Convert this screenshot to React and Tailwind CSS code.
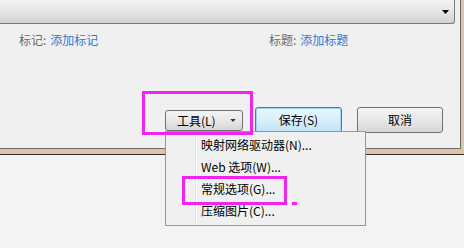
import React from "react";

const menuItems = [
  "映射网络驱动器(N)...",
  "Web 选项(W)...",
  "常规选项(G)...",
  "压缩图片(C)...",
];

const Caret = ({ className }) => (
  <svg width="7" height="4" viewBox="0 0 7 4" className={className}>
    <path d="M0 0H7L3.5 4Z" fill="currentColor" />
  </svg>
);

export default function App() {
  return (
    <div
      className="relative w-[464px] h-[248px] overflow-hidden bg-[#f3f3f3] text-[12px] leading-[16px]"
      style={{ fontFamily: '"Noto Sans CJK SC", "Noto Sans", sans-serif' }}
    >
      {/* window with frame */}
      <div className="bg-[#dfc4a8] pr-[3px] pb-[5px] border-b border-[#2e2e2e]">
        <div className="h-[149px] bg-[#f0f0f0] border-r border-b border-[#6b6b6b]">
          {/* combobox, cut off at top */}
          <div className="w-[455px] h-[24px] flex items-center justify-end pr-[5px] border-r border-b border-[#7a7a7a] rounded-br-[3px] bg-gradient-to-b from-[#f3f3f3] via-[#e6e6e6] to-[#d2d2d2]">
            <Caret className="text-black" />
          </div>

          {/* labels */}
          <div className="flex mt-[8px] pl-[19px]">
            <div className="w-[250px] flex">
              <span className="text-[#6a6a6a]">标记:</span>
              <span className="ml-[4px] text-[#2b7bd4]">添加标记</span>
            </div>
            <div className="flex">
              <span className="text-[#6a6a6a]">标题:</span>
              <span className="ml-[4px] text-[#2b7bd4]">添加标题</span>
            </div>
          </div>

          {/* buttons */}
          <div className="flex items-start mt-[59px] ml-[165px]">
            <div className="mt-[3px] w-[78px] h-[21px] flex items-center pl-[11px] pr-[6px] rounded-[3px] border border-[#707070] bg-gradient-to-b from-[#f4f4f4] via-[#e8e8e8] to-[#d6d6d6] text-black">
              <span className="flex-1">工具(L)</span>
              <Caret className="text-[#333] w-[6px] h-[3px]" />
            </div>
            <div className="ml-[12px] w-[87px] h-[26px] flex items-center justify-center rounded-[3px] border border-[#3c7fb1] bg-gradient-to-b from-[#eaf6fd] via-[#d9effb] to-[#bfe3f7] text-black shadow-[inset_0_0_0_1px_#9fd4f3]">
              保存(S)
            </div>
            <div className="ml-[15px] w-[86px] h-[26px] flex items-center justify-center rounded-[3px] border border-[#707070] bg-gradient-to-b from-[#f4f4f4] via-[#e8e8e8] to-[#d6d6d6] text-black">
              取消
            </div>
          </div>
        </div>
      </div>

      {/* dropdown menu */}
      <div className="absolute left-[165px] top-[131px] w-[201px] h-[95px] border border-[#979797] bg-[#f0f0f0] p-[2px]">
        <div className="relative h-full">
          <div className="absolute left-[27px] top-0 bottom-0 w-[2px] border-l border-[#e2e3e3] bg-white" />
          {menuItems.map((item) => (
            <div key={item} className="h-[22px] flex items-center pl-[33px] text-black">
              {item}
            </div>
          ))}
        </div>
      </div>

      {/* annotation marks */}
      <div className="absolute left-[142px] top-[91px] w-[111px] h-[44px] border-[3px] border-[#f023f0]" />
      <div className="absolute left-[182px] top-[176px] w-[105px] h-[29px] border-[3px] border-[#f023f0]" />
      <div className="absolute left-[292px] top-[202px] w-[5px] h-[3px] bg-[#f023f0]" />
    </div>
  );
}
